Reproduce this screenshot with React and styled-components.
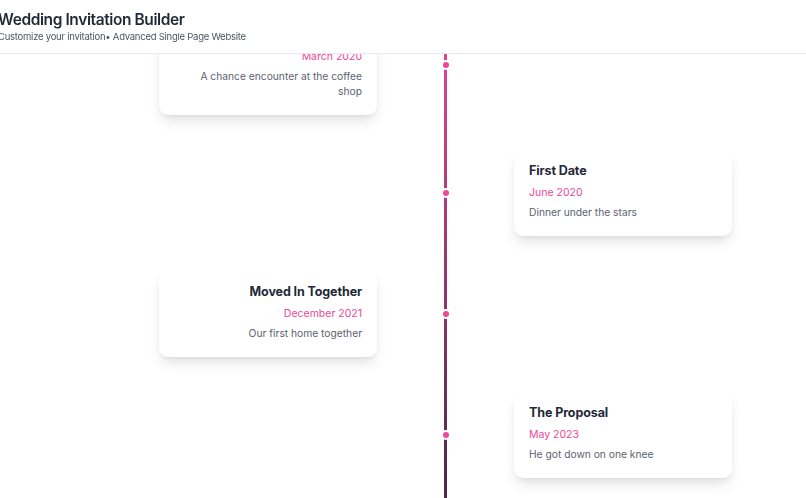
import styled, { createGlobalStyle } from "styled-components";

const GlobalStyle = createGlobalStyle`
  html, body {
    margin: 0;
    padding: 0;
    background: #ffffff;
    overflow: hidden;
    font-family: Inter, "Noto Sans", sans-serif;
    -webkit-font-smoothing: antialiased;
  }

  #root {
    min-height: 100vh;
  }
`;

const milestones = [
  {
    title: "First Meeting",
    date: "March 2020",
    text: "A chance encounter at the coffee shop",
  },
  { title: "First Date", date: "June 2020", text: "Dinner under the stars" },
  {
    title: "Moved In Together",
    date: "December 2021",
    text: "Our first home together",
  },
  { title: "The Proposal", date: "May 2023", text: "He got down on one knee" },
];

const App = () => {
  return (
    <>
      <GlobalStyle />
      <Header>
        <Brand>
          <Title>Wedding Invitation Builder</Title>
          <Subtitle>
            Customize your invitation• Advanced Single Page Website
          </Subtitle>
        </Brand>
      </Header>
      <Timeline>
        {milestones.map((m, i) => {
          const side = i % 2 === 0 ? "left" : "right";
          return (
            <Item key={m.title}>
              <Card $side={side}>
                <CardTitle>{m.title}</CardTitle>
                <CardDate>{m.date}</CardDate>
                <CardText>{m.text}</CardText>
              </Card>
              <Dot />
            </Item>
          );
        })}
      </Timeline>
    </>
  );
};

const Header = styled.header`
  position: fixed;
  top: 0;
  left: 0;
  right: 0;
  z-index: 10;
  background: #ffffff;
  border-bottom: 1px solid #e9eaee;
  padding: 10px 0 9px;
`;

const Brand = styled.div`
  display: flex;
  flex-direction: column;
  margin-left: -2px;
`;

const Title = styled.h1`
  margin: 0;
  font-size: 15.5px;
  line-height: 20px;
  font-weight: 600;
  color: #1f2937;
  letter-spacing: -0.4px;
`;

const Subtitle = styled.p`
  margin: 0;
  font-size: 9.5px;
  line-height: 14px;
  color: #4b5563;
  letter-spacing: -0.25px;
`;

const Timeline = styled.div`
  position: relative;
  width: 573px;
  margin-left: 159px;
  padding: 14px 0 40px;
  display: flex;
  flex-direction: column;
  gap: 35px;

  &::before {
    content: "";
    position: absolute;
    top: 0;
    bottom: 0;
    left: 285px;
    width: 3px;
    background: linear-gradient(
      to bottom,
      #ec4899 0%,
      #c13f80 28%,
      #8e3468 58%,
      #4f2a4c 92%
    );
  }
`;

const Item = styled.div`
  display: grid;
  grid-template-columns: 218px 1fr 218px;
  align-items: center;
`;

const Card = styled.div`
  grid-row: 1;
  grid-column: ${(p) => (p.$side === "left" ? 1 : 3)};
  text-align: ${(p) => (p.$side === "left" ? "right" : "left")};
  background: #ffffff;
  border-radius: 9px;
  padding: ${(p) =>
    p.$side === "left" ? "12px 15px 16px 20px" : "12px 20px 16px 15px"};
  box-shadow: 0 8px 13px -2px rgba(0, 0, 0, 0.1),
    0 3px 6px -3px rgba(0, 0, 0, 0.1);
`;

const CardTitle = styled.h3`
  margin: 0 0 6px;
  font-size: 12.5px;
  line-height: 17px;
  font-weight: 700;
  color: #1f2937;
  letter-spacing: -0.1px;
`;

const CardDate = styled.div`
  margin-bottom: 5px;
  font-size: 10.5px;
  line-height: 15px;
  color: #ec4899;
`;

const CardText = styled.p`
  margin: 0;
  font-size: 10.25px;
  line-height: 15px;
  color: #5b6270;
`;

const Dot = styled.span`
  grid-row: 1;
  grid-column: 2;
  justify-self: center;
  position: relative;
  z-index: 1;
  width: 6px;
  height: 6px;
  border-radius: 50%;
  background: #ec4899;
  border: 2px solid #ffffff;
`;

export default App;
